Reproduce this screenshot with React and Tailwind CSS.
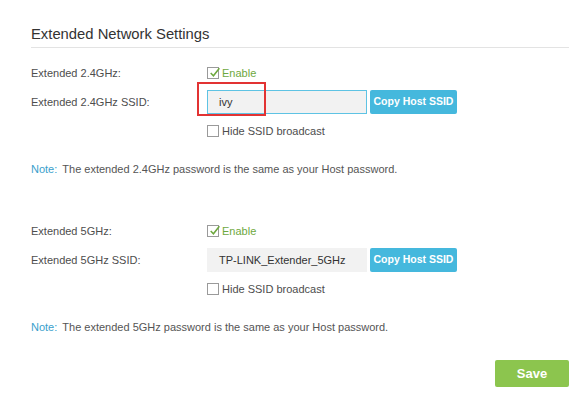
import React from "react";

function Check({ checked }) {
  return (
    <span className="relative inline-block w-[12px] h-[12px] border border-[#9a9a9a] bg-white shrink-0">
      {checked && (
        <svg
          viewBox="0 0 12 12"
          className="absolute left-[0px] top-[-2px] w-[13px] h-[13px]"
          fill="none"
          stroke="#6ea83e"
          strokeWidth="1.4"
        >
          <path d="M2.5 6.5 L5 9 L10.5 2" />
        </svg>
      )}
    </span>
  );
}

function Band({ band, ssid, focused, note }) {
  return (
    <div className="flex flex-col">
      {/* ENABLE */}
      <div className="flex items-center h-[20px]">
        <div className="w-[176px] text-[#4d4d4d]">Extended {band}:</div>
        <label className="flex items-center gap-[3px] text-[#6ea83e]">
          <Check checked />
          <span>Enable</span>
        </label>
      </div>

      {/* SSID */}
      <div className="flex items-center h-[24px] mt-[7px]">
        <div className="w-[176px] text-[#4d4d4d]">Extended {band} SSID:</div>
        <div className="relative">
          <div
            className={`w-[160px] h-[24px] flex items-center px-[11px] bg-[#f2f2f2] text-[#333] text-[11px] whitespace-nowrap overflow-hidden border ${
              focused ? "border-[#5ec3e4]" : "border-[#f2f2f2]"
            }`}
          >
            {ssid}
          </div>
          {focused && (
            <div className="absolute left-[-10px] top-[-8px] w-[69px] h-[34px] border-2 border-[#e23333]" />
          )}
        </div>
        <button className="ml-[3px] w-[87px] h-[24px] rounded-[2px] bg-[#45b8dd] text-white text-[10.5px] font-bold whitespace-nowrap">
          Copy Host SSID
        </button>
      </div>

      {/* HIDE */}
      <div className="flex items-center h-[20px] mt-[7px]">
        <div className="w-[176px]" />
        <label className="flex items-center gap-[3px] text-[#4d4d4d]">
          <Check />
          <span>Hide SSID broadcast</span>
        </label>
      </div>

      {/* NOTE */}
      <div className="h-[16px] flex items-center mt-[20px] text-[#555] whitespace-nowrap">
        <span className="text-[#3a9fcc] mr-[5px]">Note:</span>
        <span>{note}</span>
      </div>
    </div>
  );
}

export default function App() {
  return (
    <div
      className="w-[576px] h-[408px] bg-white pl-[31px] pr-[7px] text-[11px]"
      style={{ fontFamily: '"Liberation Sans", Arial, sans-serif' }}
    >
      {/* HEADER */}
      <div className="pt-[24px] pb-[3px] border-b border-[#e3e3e3]">
        <h1 className="text-[14.8px] leading-[20px] text-[#333]">
          Extended Network Settings
        </h1>
      </div>

      <div className="mt-[15px]">
        <Band
          band="2.4GHz"
          ssid="ivy"
          focused
          note="The extended 2.4GHz password is the same as your Host password."
        />
      </div>

      <div className="mt-[44px]">
        <Band
          band="5GHz"
          ssid="TP-LINK_Extender_5GHz"
          note="The extended 5GHz password is the same as your Host password."
        />
      </div>

      {/* SAVE */}
      <div className="flex justify-end mt-[25px]">
        <button className="w-[74px] h-[27px] rounded-[2px] bg-[#8cc54e] text-white text-[13px] font-bold">
          Save
        </button>
      </div>
    </div>
  );
}
